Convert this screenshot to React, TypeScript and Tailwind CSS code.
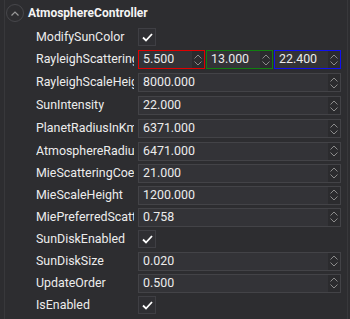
import React from "react";

type Row =
  | { kind: "check"; label: string; h: number }
  | { kind: "num"; label: string; value: string; h: number }
  | { kind: "vec"; label: string; values: string[]; h: number };

const rows: Row[] = [
  { kind: "check", label: "ModifySunColor", h: 22 },
  { kind: "vec", label: "RayleighScattering", values: ["5.500", "13.000", "22.400"], h: 23 },
  { kind: "num", label: "RayleighScaleHeight", value: "8000.000", h: 23 },
  { kind: "num", label: "SunIntensity", value: "22.000", h: 23 },
  { kind: "num", label: "PlanetRadiusInKm", value: "6371.000", h: 23 },
  { kind: "num", label: "AtmosphereRadius", value: "6471.000", h: 22 },
  { kind: "num", label: "MieScatteringCoefficient", value: "21.000", h: 22 },
  { kind: "num", label: "MieScaleHeight", value: "1200.000", h: 22 },
  { kind: "num", label: "MiePreferredScattering", value: "0.758", h: 22 },
  { kind: "check", label: "SunDiskEnabled", h: 22 },
  { kind: "num", label: "SunDiskSize", value: "0.020", h: 22 },
  { kind: "num", label: "UpdateOrder", value: "0.500", h: 22 },
  { kind: "check", label: "IsEnabled", h: 22 },
];

const Spinner = () => (
  <div className="w-[12px] h-full bg-[#2b2b2e] flex flex-col items-center justify-center gap-[2px]">
    <svg width="8" height="5" viewBox="0 0 8 5">
      <path d="M0.5 4.5 L4 1 L7.5 4.5" fill="none" stroke="#8a8a8a" strokeWidth="1" />
    </svg>
    <svg width="8" height="5" viewBox="0 0 8 5">
      <path d="M0.5 0.5 L4 4 L7.5 0.5" fill="none" stroke="#8a8a8a" strokeWidth="1" />
    </svg>
  </div>
);

const NumBox = ({ value, border }: { value: string; border: string }) => (
  <div className={`flex h-[19px] flex-1 min-w-0 items-center border ${border} bg-[#333337]`}>
    <div className="flex-1 pl-[4px] leading-none whitespace-nowrap overflow-hidden">{value}</div>
    <Spinner />
  </div>
);

const CheckBox = () => (
  <div className="w-[18px] h-[18px] border border-[#3f3f44] bg-[#2f2f33] flex items-center justify-center">
    <svg width="11" height="9" viewBox="0 0 11 9">
      <path d="M1 4.5 L4 7.5 L10 1" fill="none" stroke="#ffffff" strokeWidth="1.8" />
    </svg>
  </div>
);

export default function App() {
  return (
    <div className="w-[350px] h-[319px] bg-[#2d2d30] overflow-hidden font-['Roboto',sans-serif] text-[12.4px] text-[#ececec] pl-[4px]">
      <div className="w-[344px] h-full border-l border-r border-[#38383b]">
        {/* header */}
        <div className="flex items-center h-[26px] pl-[1px]">
          <div className="w-[18px] h-[18px] rounded-full border border-[#47474b] flex items-center justify-center">
            <svg width="8" height="5" viewBox="0 0 8 5">
              <path d="M0.5 4.5 L4 1 L7.5 4.5" fill="none" stroke="#9a9a9a" strokeWidth="1.2" />
            </svg>
          </div>
          <div className="ml-[4px] font-bold text-[12px] text-[#f4f4f4]">AtmosphereController</div>
        </div>
        <div className="flex flex-col">
          {rows.map((r) => (
            <div key={r.label} className="flex items-center" style={{ height: r.h }}>
              <div className="w-[133px] pl-[31px] shrink-0 overflow-hidden whitespace-nowrap">
                <div className="w-[98px] overflow-hidden">{r.label}</div>
              </div>
              <div className="w-[203px] flex items-center">
                {r.kind === "check" && <CheckBox />}
                {r.kind === "num" && <NumBox value={r.value} border="border-[#434347]" />}
                {r.kind === "vec" && (
                  <div className="flex w-full gap-[1px]">
                    <NumBox value={r.values[0]} border="border-[#e00000]" />
                    <NumBox value={r.values[1]} border="border-[#108010]" />
                    <NumBox value={r.values[2]} border="border-[#1010f0]" />
                  </div>
                )}
              </div>
            </div>
          ))}
        </div>
      </div>
    </div>
  );
}
